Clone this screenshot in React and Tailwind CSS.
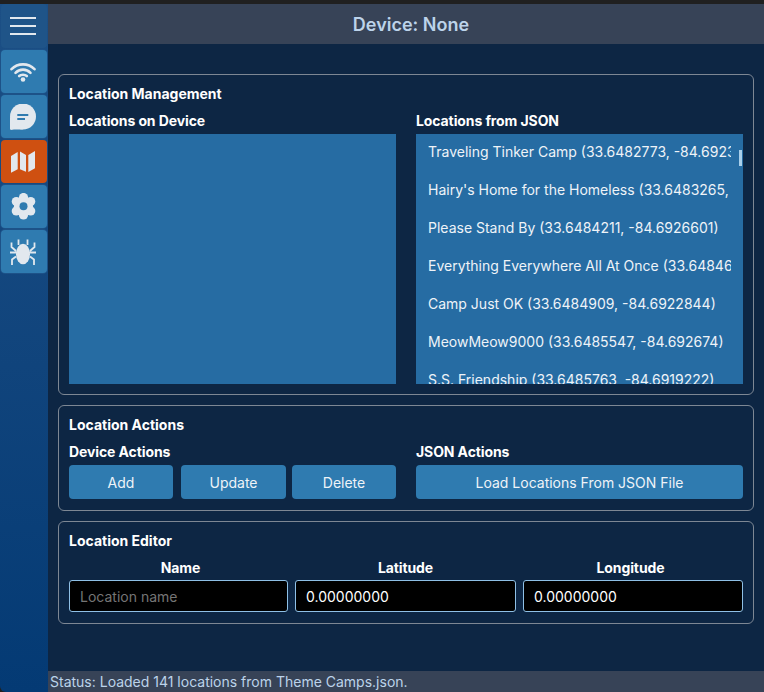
import React from "react";

const F = { fontFamily: "Inter, 'Liberation Sans', sans-serif" };
const ink = "#e2e8ee";
const btn = "#2f7bb0";

function Wifi() {
  return (
    <svg width="26" height="20" viewBox="0 0 26 20" fill="none" stroke={ink} strokeWidth="2.6" strokeLinecap="round">
      <path d="M1.500 7.200C7.800 .8 18.200 .8 24.500 7.200" />
      <path d="M5.500 10.800C9.600 6.600 16.400 6.600 20.500 10.800" />
      <path d="M9.200 14C11 12.300 15 12.300 16.800 14" />
      <circle cx="13" cy="17.500" r="2.300" fill={ink} stroke="none" />
    </svg>
  );
}
function Chat() {
  return (
    <svg width="26" height="26" viewBox="0 0 26 26">
      <circle cx="13" cy="12.500" r="13" fill={ink} />
      <path fill={ink} d="M0 13L13 25.500L4 25.600L.8 26L0 25Z" />
      <path fill={btn} d="M7.300 10h11v2h-11zM7.300 14h7.700v2h-7.700z" />
    </svg>
  );
}
function MapIcon() {
  return (
    <svg width="24" height="22" viewBox="0 0 24 22" fill={ink}>
      <path d="M0 5L6.700 1V18.300L0 21.700Z" />
      <path d="M9 .5L15 4V20.700L9 18.300Z" />
      <path d="M17.300 4L24 0V17.300L17.300 21Z" />
    </svg>
  );
}
function Gear() {
  const lobes = [[12.500, 4.500], [19.700, 8.600], [19.700, 17.900], [12.500, 22], [5.300, 17.900], [5.300, 8.600]];
  return (
    <svg width="25" height="27" viewBox="0 0 25 27">
      <circle cx="12.500" cy="13.300" r="9.500" fill={ink} />
      {lobes.map(([x, y]) => <circle key={x + "-" + y} cx={x} cy={y} r="4.600" fill={ink} />)}
      <circle cx="12.500" cy="13.300" r="4" fill={btn} />
    </svg>
  );
}
function Bug() {
  return (
    <svg width="26" height="26" viewBox="0 0 26 26" fill="none" stroke={ink} strokeWidth="1.800">
      <ellipse cx="13" cy="15" rx="7" ry="10.300" fill={ink} stroke="none" />
      <path d="M8.500 6V.5M17.500 6V.5M0 13.500H26M6 12L1.500 8V3.500M20 12L24.500 8V3.500M6 17.500L2 20.500V26M20 17.500L24 20.500V26" />
    </svg>
  );
}

const navBtn = "flex h-[43px] w-[46px] items-center justify-center rounded-[4px] bg-[#2f7bb0] pr-[2px] shadow-[0_0_0_1px_#1d5288]";

function Panel({ title, className = "", children }) {
  return (
    <section className={"flex flex-col rounded-[6px] border border-[#7d8794] px-[10px] pt-[10px] " + className}>
      <h2 className="h-[17px] text-[14px] font-bold leading-[17px] text-white">{title}</h2>
      {children}
    </section>
  );
}

function SubTitle({ children }) {
  return <h3 className="h-[17px] text-[14px] font-bold leading-[17px] tracking-[-0.1px] text-white">{children}</h3>;
}

function Btn({ className = "", children }) {
  return (
    <button className={"flex h-[34px] items-center justify-center rounded-[4px] bg-[#2f7bb0] text-[14px] text-[#eef3f8] " + className}>
      {children}
    </button>
  );
}

const locations = [
  "Traveling Tinker Camp (33.6482773, -84.6923",
  "Hairy's Home for the Homeless (33.6483265,",
  "Please Stand By (33.6484211, -84.6926601)",
  "Everything Everywhere All At Once (33.64846",
  "Camp Just OK (33.6484909, -84.6922844)",
  "MeowMeow9000 (33.6485547, -84.692674)",
  "S.S. Friendship (33.6485763, -84.6919222)",
];

function Field({ label, className = "", labelClass = "", children }) {
  return (
    <div className={"flex shrink-0 flex-col " + className}>
      <label className={"h-[17px] text-center text-[14px] font-bold leading-[17px] tracking-[-0.1px] text-white " + labelClass}>{label}</label>
      <div className="mt-[4px]">{children}</div>
    </div>
  );
}

const inputCls = "h-[32px] w-full rounded-[3px] border border-[#8fc0e6] bg-black px-[10px] text-[14px] text-white outline-none placeholder:text-[#757575]";

export default function App() {
  return (
    <div style={F} className="flex h-[692px] w-[764px] flex-col overflow-hidden bg-[#202020]">
      <div className="h-[4px] shrink-0" />
      <div className="flex min-h-0 flex-1 overflow-hidden rounded-bl-[6px]">
        <nav className="flex w-[48px] shrink-0 flex-col gap-[2px] bg-gradient-to-b from-[#1c4f85] to-[#043a74] pl-[1px]">
          <button className="flex h-[44px] w-[46px] items-center justify-center rounded-[4px] bg-[#1f5488] pr-[2px]">
            <svg width="26" height="18" viewBox="0 0 26 18" stroke={ink} strokeWidth="2"><path d="M0 1H26M0 9H26M0 17H26" /></svg>
          </button>
          <button className={navBtn}><Wifi /></button>
          <button className={navBtn}><Chat /></button>
          <button className="flex h-[43px] w-[46px] items-center justify-center rounded-[4px] bg-[#cf5011] pr-[2px]"><MapIcon /></button>
          <button className={navBtn}><Gear /></button>
          <button className={navBtn}><Bug /></button>
        </nav>
        <div className="flex min-w-0 flex-1 flex-col bg-[#0d2644]">
          <header className="flex h-[40px] shrink-0 items-center justify-center bg-[#374357] pl-[10px] text-[18px] font-semibold text-[#bcd3ea]">
            Device: None
          </header>
          <main className="flex min-h-0 flex-1 flex-col gap-[10px] pl-[10px] pr-[10px] pt-[30px]">
            <Panel title="Location Management" className="h-[321px]">
              <div className="mt-[10px] flex gap-[20px]">
                <div className="w-[327px]">
                  <SubTitle>Locations on Device</SubTitle>
                  <div className="mt-[5px] h-[250px] bg-[#266ca3]" />
                </div>
                <div className="w-[327px]">
                  <SubTitle>Locations from JSON</SubTitle>
                  <div className="relative mt-[5px] h-[250px] overflow-hidden bg-[#266ca3]">
                    <ul className="pl-[12px] pt-[9px]">
                      {locations.map((l) => (
                        <li key={l} className="h-[38px] w-[303px] overflow-hidden whitespace-nowrap text-[14px] leading-[18px] text-[#eef3f8]">{l}</li>
                      ))}
                    </ul>
                    <div className="absolute right-[1px] top-[16px] h-[16px] w-[3px] bg-[#a9cfea]" />
                  </div>
                </div>
              </div>
            </Panel>
            <Panel title="Location Actions" className="h-[106px]">
              <div className="mt-[10px] flex gap-[20px]">
                <div className="w-[327px]">
                  <SubTitle>Device Actions</SubTitle>
                  <div className="mt-[5px] flex">
                    <Btn className="w-[104px]">Add</Btn>
                    <Btn className="ml-[8px] w-[105px]">Update</Btn>
                    <Btn className="ml-[6px] w-[104px]">Delete</Btn>
                  </div>
                </div>
                <div className="w-[327px]">
                  <SubTitle>JSON Actions</SubTitle>
                  <div className="mt-[5px]"><Btn className="w-full">Load Locations From JSON File</Btn></div>
                </div>
              </div>
            </Panel>
            <Panel title="Location Editor" className="h-[103px]">
              <div className="mt-[10px] flex gap-[7px]">
                <Field label="Name" className="w-[219px]" labelClass="pl-[4px]"><input className={inputCls} placeholder="Location name" /></Field>
                <Field label="Latitude" className="w-[221px]"><input className={inputCls} defaultValue="0.00000000" /></Field>
                <Field label="Longitude" className="w-[220px]" labelClass="pr-[5px]"><input className={inputCls} defaultValue="0.00000000" /></Field>
              </div>
            </Panel>
          </main>
          <footer className="flex h-[21px] shrink-0 items-center bg-[#374357] pl-[2px] text-[14px] text-[#bcd3ea]">
            Status: Loaded 141 locations from Theme Camps.json.
          </footer>
        </div>
      </div>
    </div>
  );
}
